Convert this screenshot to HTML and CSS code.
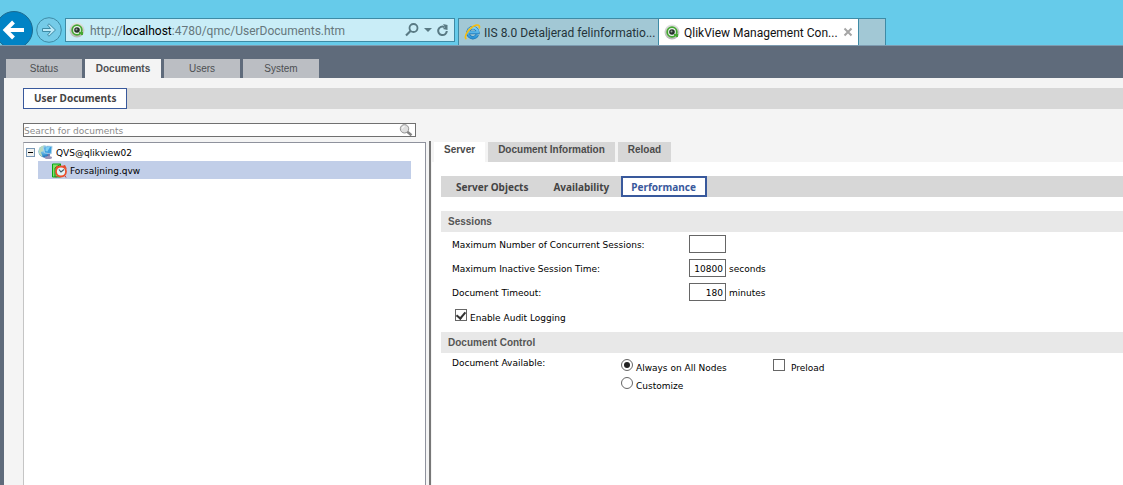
FILE: index.html
```html
<!DOCTYPE html>
<html lang="en">
<head>
<meta charset="utf-8">
<title>QlikView Management Console</title>
<link rel="stylesheet" href="styles.css">
</head>
<body>
<svg class="defs" width="0" height="0" aria-hidden="true">
  <defs>
    <linearGradient id="ring" x1="0" y1="0" x2="0" y2="1"><stop offset="0" stop-color="#e2e2e2"/><stop offset="1" stop-color="#b3b8b3"/></linearGradient>
    <linearGradient id="ie" x1="0" y1="0" x2="0" y2="1"><stop offset="0" stop-color="#7fd2f8"/><stop offset="1" stop-color="#2b93d6"/></linearGradient>
    <radialGradient id="globe" cx=".4" cy=".3" r=".8"><stop offset="0" stop-color="#b9e7fa"/><stop offset=".6" stop-color="#3b9ad6"/><stop offset="1" stop-color="#1b4f9c"/></radialGradient>
    <symbol id="qlik" viewBox="0 0 16 16">
      <circle cx="8" cy="8" r="7.500" fill="url(#ring)"/>
      <circle cx="8" cy="8" r="4.800" fill="#eef3ee" stroke="#45a832" stroke-width="1.800"/>
      <path d="M10 11h3v2" fill="none" stroke="#45a832" stroke-width="2"/>
      <circle cx="8" cy="8" r="2.800" fill="#25332b"/>
      <circle cx="7.500" cy="7.500" r="1" fill="#9da3a2"/>
    </symbol>
  </defs>
</svg>
<header class="chrome">
  <div class="nav-buttons">
    <button class="back" aria-label="Back"><svg width="38" height="38" viewBox="0 0 38 38"><circle cx="19" cy="19" r="18.500" fill="#0083c5" stroke="#1c6a90"/><path d="M29 19H11M18.500 11L10.500 19l8 8" fill="none" stroke="#fff" stroke-width="4"/></svg></button>
    <button class="forward" aria-label="Forward"><svg width="26" height="26" viewBox="0 0 26 26"><circle cx="13" cy="13" r="12.300" fill="#75cbe8" stroke="#3e8ba6"/><path d="M6.500 11.500h8L11.500 8l1.500-1.200L19.500 13 13 19.200 11.500 18l3-3.500h-8z" fill="#bce9f7" stroke="#3e8ba6"/></svg></button>
  </div>
  <div class="address">
    <svg width="16" height="16"><use href="#qlik"/></svg>
    <span class="url">http://<b>localhost</b>:4780/qmc/UserDocuments.htm</span>
    <button aria-label="Search"><svg width="14" height="14" viewBox="0 0 14 14" fill="none" stroke="#597a84"><circle cx="8.500" cy="5" r="4" stroke-width="1.800"/><path d="M5.500 8L1 12.500" stroke-width="2.200"/></svg></button>
    <button aria-label="Address list"><svg width="8" height="4" viewBox="0 0 8 4"><path d="M0 0h8L4 4z" fill="#597a84"/></svg></button>
    <button aria-label="Refresh"><svg width="12" height="13" viewBox="0 0 12 13"><path d="M7.500 3A4.300 4.300 0 1 0 9.800 7" fill="none" stroke="#597a84" stroke-width="2"/><path d="M6 0l4.500 1v5L6 5l2-2z" fill="#597a84"/></svg></button>
  </div>
  <nav class="browser-tabs">
    <div class="browser-tab"><svg width="17" height="18" viewBox="0 0 18 18"><path d="M14.200 12A5.300 5.300 0 1 1 14.700 9.500H5" fill="none" stroke="#1871b1" stroke-width="3.600"/><path d="M14.200 12A5.300 5.300 0 1 1 14.700 9.500H5" fill="none" stroke="url(#ie)" stroke-width="2.400"/><path d="M2.500 16.500C-1 14 6 3.500 13 1.700c3-.6 4 1 3 3.500" fill="none" stroke="#f4bd13" stroke-width="1.800"/></svg><span>IIS 8.0 Detaljerad felinformatio...</span></div>
    <div class="browser-tab current"><svg width="16" height="16"><use href="#qlik"/></svg><span>QlikView Management Con...</span><button aria-label="Close tab"><svg width="10" height="10" viewBox="0 0 10 10"><path d="M1.500 1.500l7 7m0-7l-7 7" stroke="#a5a5a5" stroke-width="2"/></svg></button></div>
    <button class="new-tab" aria-label="New tab"></button>
  </nav>
</header>
<div class="app">
  <nav class="main-tabs">
    <a href="#">Status</a><a href="#" class="active">Documents</a><a href="#">Users</a><a href="#">System</a>
  </nav>
  <main class="page">
    <nav class="sub-tabs"><a href="#">User Documents</a></nav>
    <div class="columns">
      <aside class="sidebar">
        <div class="search">
          <input type="text" aria-label="Search for documents" placeholder="Search for documents">
          <svg width="14" height="12" viewBox="0 0 14 12"><path d="M8 7.500l4.500 3.800" stroke="#858585" stroke-width="2.500"/><circle cx="5.500" cy="4.800" r="4.200" fill="#dedede" stroke="#929292"/><path d="M3.500 4.500q0-2 2-2" fill="none" stroke="#fff"/></svg>
        </div>
        <div class="tree">
          <div class="tree-row">
            <button aria-label="Collapse"><svg width="9" height="9" viewBox="0 0 9 9"><rect x=".5" y=".5" width="8" height="8" fill="#f2f2ef" stroke="#7897b5"/><path d="M2 4.500h5" stroke="#000"/></svg></button>
            <svg width="15" height="16" viewBox="0 0 16 16"><circle cx="7" cy="7.500" r="6.500" fill="url(#globe)"/><path d="M1 6C2 2 5 1 7 1L5 4l1 3-3 1 2 5C2 12 0 9 1 6z" fill="#b9dabf"/><path d="M6 3q4-2 9-1l-1 8-7-1z" fill="#3c9fdf" stroke="#a9cfe6"/><path d="M8 3l5-.5-3 5-2-.5z" fill="#7fd0f3"/><path d="M11 10l1 3" stroke="#7772a6" stroke-width="2"/><ellipse cx="11" cy="14" rx="4" ry="1.500" fill="#9a94b8"/></svg>
            <span>QVS@qlikview02</span>
          </div>
          <div class="tree-row selected">
            <svg width="16" height="15" viewBox="0 0 16 15"><path d="M.5 1h8v13h-8z" fill="#83df6a" stroke="#06a713"/><path d="M3 14V5l6-4" fill="none" stroke="#078e15"/><path d="M3 6l2-3.500 3 1zm7-3l3-1 2 4z" fill="#e04426"/><circle cx="9" cy="8.500" r="5" fill="#e2f4f8" stroke="#ec4f2c" stroke-width="1.800"/><path d="M7 6.500L9 9l3-2.500" fill="none" stroke="#475d6a" stroke-width="1.200"/><path d="M5 13l-1 1.500m9-1.500l1 1.500" stroke="#b33"/></svg>
            <span>Forsaljning.qvw</span>
          </div>
        </div>
      </aside>
      <section class="detail">
        <nav class="detail-tabs"><a href="#" class="active">Server</a><a href="#">Document Information</a><a href="#">Reload</a></nav>
        <div class="detail-body">
          <nav class="server-tabs"><a href="#">Server Objects</a><a href="#">Availability</a><a href="#" class="active">Performance</a></nav>
          <h2>Sessions</h2>
          <form class="sessions">
            <div class="field"><label for="max-sessions">Maximum Number of Concurrent Sessions:</label><input id="max-sessions" type="text"></div>
            <div class="field"><label for="inactive">Maximum Inactive Session Time:</label><input id="inactive" type="text" value="10800"><span>seconds</span></div>
            <div class="field"><label for="timeout">Document Timeout:</label><input id="timeout" type="text" value="180"><span>minutes</span></div>
            <label class="choice audit"><input type="checkbox" checked><span>Enable Audit Logging</span></label>
          </form>
          <h2>Document Control</h2>
          <form class="availability">
            <span class="caption">Document Available:</span>
            <div class="radios">
              <label class="choice"><input type="radio" name="nodes" checked><span>Always on All Nodes</span></label>
              <label class="choice"><input type="radio" name="nodes"><span>Customize</span></label>
            </div>
            <label class="choice preload"><input type="checkbox"><span>Preload</span></label>
          </form>
        </div>
      </section>
    </div>
  </main>
</div>
</body>
</html>
```
FILE: styles.css
```css
* { box-sizing: border-box; }
body {
  margin: 0;
  min-height: 100vh;
  display: flex;
  flex-direction: column;
  font: 9px/14px "DejaVu Sans", sans-serif;
  color: #000;
  background: #f4f4f4;
}
a { color: inherit; text-decoration: none; }
button { padding: 0; border: 0; background: none; display: flex; align-items: center; }
svg { display: block; flex: none; }
.defs { position: absolute; }

.chrome {
  height: 46px;
  display: flex;
  align-items: flex-end;
  overflow: hidden;
  background: #66cbea;
  border-bottom: 1px solid #7d9bb0;
  font: 12px/16px Roboto, sans-serif;
}
.nav-buttons { display: flex; align-items: center; gap: 3px; height: 30px; margin-left: -5px; }
.address {
  display: flex;
  align-items: center;
  flex: none;
  width: 390px;
  height: 24px;
  margin: 0 3px 3px;
  padding: 0 5px 0 3px;
  gap: 5px;
  background: #c9edf7;
  border: 1px solid #3e8ba6;
}
.url { flex: 1; padding-top: 1px; color: #66777c; }
.url b { font-weight: 400; color: #000; }
.browser-tabs { display: flex; height: 27px; }
.browser-tab {
  display: flex;
  align-items: center;
  gap: 3px;
  width: 200px;
  padding: 0 5px;
  background: #a2c8d5;
  border: 1px solid #3e8ba6;
  border-width: 1px 0 0 1px;
  color: #25343a;
  white-space: nowrap;
}
.browser-tab span { flex: 1; padding-top: 2px; }
.browser-tab.current { background: #fff; color: #111; gap: 4px; }
.new-tab { width: 28px; background: #a2c8d5; border: 1px solid #3e8ba6; border-bottom: 0; }

.app { flex: 1; display: flex; flex-direction: column; background: #5f6b7b; }
.main-tabs { display: flex; gap: 3px; padding: 13px 0 0 6px; font: 10px/19px "Liberation Sans", sans-serif; }
.main-tabs a { width: 76px; height: 19px; text-align: center; color: #4d4f52; background: #bbbec3; }
.main-tabs .active { font-weight: 700; background: #f4f4f4; }

.page { flex: 1; display: flex; flex-direction: column; margin-left: 4px; padding: 10px 0 0 19px; background: #f4f4f4; }
.sub-tabs { display: flex; background: #d7d7d7; }
.sub-tabs a {
  height: 21px;
  padding: 0 10px;
  border: 1px solid #39599c;
  background: #fff;
  color: #444;
  font: 700 10px/19px "Noto Sans", sans-serif;
}
.columns { flex: 1; display: flex; }
.sidebar { flex: none; width: 408px; padding-top: 14px; display: flex; flex-direction: column; border-right: 2px solid #777; border-image: linear-gradient(#f4f4f4 33px, #777 33px) 1; }
.search { display: flex; align-items: center; width: 393px; height: 14px; margin-bottom: 5px; border: 1px solid #707070; background: #fff; padding-right: 2px; }
.search input { flex: 1; height: 12px; padding: 1px 0 0; border: 0; outline: 0; font: 9px/11px "DejaVu Sans", sans-serif; }
.search input::placeholder { color: #8b8b8b; }
.tree { flex: 1; width: 403px; padding: 0 14px 0 2px; background: #fff; border: 1px solid #8f929d; border-left-color: #c5c5c5; border-bottom: 0; }
.tree-row { display: flex; align-items: center; gap: 3px; height: 18px; }
.tree-row span { padding-top: 2px; }
.tree-row.selected { margin-left: 12px; padding-left: 14px; background: #c1cee8; gap: 2px; }

.detail { flex: 1; display: flex; flex-direction: column; padding: 33px 0 0 1px; }
.detail-tabs { display: flex; gap: 3px; padding-left: 2px; font: 700 10px/16px "Liberation Sans", sans-serif; }
.detail-tabs a { height: 20px; padding: 0 10px; background: #d7d7d7; color: #4b4b4b; }
.detail-tabs .active { background: #fff; }
.detail-body { flex: 1; padding: 14px 0 0 9px; background: #fff; }
.server-tabs { display: flex; margin-bottom: 14px; padding-left: 2px; background: #d7d7d7; font: 700 10px/22px "Noto Sans", sans-serif; color: #444; }
.server-tabs a { height: 21px; padding: 0 12px 0 13px; }
.server-tabs .active { padding: 0 9px 0 8px; line-height: 18px; border: 2px solid #39599c; background: #fff; color: #39599c; }
h2 { margin: 0; padding-left: 7px; background: #e8e8e8; color: #555; font: 700 10px/21px "Liberation Sans", sans-serif; }
.sessions { padding: 0 11px 8px; }
.field { display: flex; align-items: center; height: 24px; line-height: 16px; }
.field label { width: 237px; padding-top: 2px; }
.field span { padding-top: 2px; }
.field input { width: 37px; height: 18px; margin-right: 3px; padding: 2px 2px 0; border: 1px solid #666; text-align: right; font: 9px/14px "DejaVu Sans", sans-serif; }
.choice { display: flex; align-items: center; gap: 3px; height: 18px; }
.choice input { appearance: none; margin: 0; width: 12px; height: 12px; border: 1px solid #666; background: #fff; display: grid; place-items: center; }
.choice span { padding-top: 6px; }
.choice input[type="radio"] { border-radius: 50%; }
.choice input[type="radio"]:checked::after { content: ""; width: 6px; height: 6px; border-radius: 50%; background: #222; }
.choice input[type="checkbox"]:checked::after { content: ""; width: 4px; height: 7px; margin-bottom: 2px; border: solid #333; border-width: 0 2px 2px 0; transform: rotate(40deg); }
.audit { margin: 2px 0 0 3px; }
.availability { display: flex; align-items: flex-start; padding: 3px 11px; }
.caption { width: 169px; }
.radios { width: 152px; }
.preload { gap: 6px; }
```
